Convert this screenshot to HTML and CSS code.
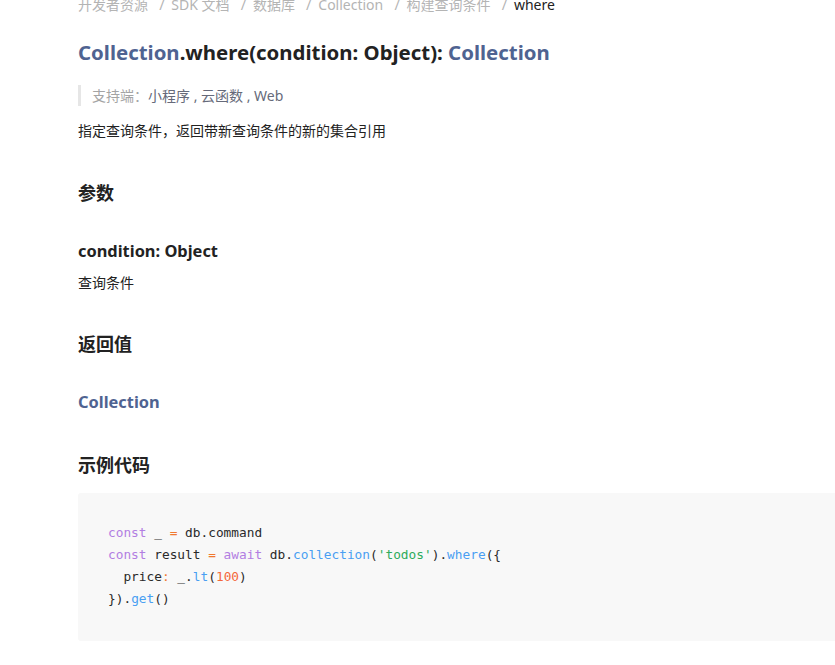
FILE: index.html
```html
<!DOCTYPE html>
<html lang="zh-CN">
<head>
<meta charset="utf-8">
<title>Collection.where</title>
<link rel="stylesheet" href="styles.css">
</head>
<body>
<div class="page">
  <nav class="crumbs">
    <span class="crumb">开发者资源</span>
    <span class="sep">/</span><span class="crumb">SDK 文档</span>
    <span class="sep">/</span><span class="crumb">数据库</span>
    <span class="sep">/</span><span class="crumb">Collection</span>
    <span class="sep">/</span><span class="crumb">构建查询条件</span>
    <span class="sep">/</span><span class="crumb current">where</span>
  </nav>
  <h1 class="title"><span class="type">Collection</span>.where(condition: Object): <span class="type">Collection</span></h1>
  <div class="support"><span class="label">支持端：</span><span class="platforms">小程序 , 云函数 , Web</span></div>
  <p class="text desc">指定查询条件，返回带新查询条件的新的集合引用</p>
  <h2 class="section">参数</h2>
  <h3 class="param">condition: Object</h3>
  <p class="text param-desc">查询条件</p>
  <h2 class="section">返回值</h2>
  <h3 class="param ret type">Collection</h3>
  <h2 class="section">示例代码</h2>
  <pre class="code"><code><span class="kw">const</span> _ <span class="op">=</span> db.command
<span class="kw">const</span> result <span class="op">=</span> <span class="kw">await</span> db.<span class="fn">collection</span>(<span class="str">'todos'</span>).<span class="fn">where</span>({
  price<span class="op">:</span> _.<span class="fn">lt</span>(<span class="num">100</span>)
}).<span class="fn">get</span>()</code></pre>
</div>
</body>
</html>
```

FILE: styles.css
```css
html, body {
  margin: 0;
  padding: 0;
  background: #ffffff;
  overflow: hidden;
}

body {
  font-family: "Noto Sans", "Noto Sans CJK SC", sans-serif;
  color: #222222;
}

.page {
  padding-left: 78px;
  width: 800px;
  margin-top: -5px;
}

.crumbs {
  font-size: 14px;
  line-height: 20px;
  color: #b4b4b4;
  white-space: nowrap;
}

.sep {
  margin: 0 7px 0 7.5px;
}

.crumb.current {
  color: #222222;
}

.title {
  margin: 22px 0 0;
  font-size: 20.4px;
  line-height: 30px;
  font-weight: 700;
  color: #222222;
}

.type {
  color: #4f6391;
}

.support {
  margin-top: 18px;
  border-left: 3px solid #e6e6e6;
  padding-left: 11px;
  font-size: 14px;
  line-height: 21px;
}

.support .label {
  color: #a4a4a4;
}

.support .platforms {
  color: #666a7a;
}

.text {
  margin: 0;
  font-size: 14px;
  line-height: 22px;
  color: #222222;
}

.desc {
  margin-top: 14px;
}

.section {
  margin: 38px 0 0;
  font-size: 18px;
  line-height: 26px;
  font-weight: 700;
  color: #222222;
}

.param {
  margin: 33px 0 0;
  font-size: 16.4px;
  line-height: 24px;
  font-weight: 700;
  color: #222222;
}

.param.ret {
  color: #4f6391;
}

.param-desc {
  margin-top: 9px;
}

.param-desc + .section {
  margin-top: 37px;
}

.code {
  margin: 15px 0 0;
  background: #f8f8f8;
  border-radius: 3px;
  padding: 29px 30px 31px;
  font-family: "DejaVu Sans Mono", "Liberation Mono", monospace;
  font-size: 12.8px;
  line-height: 22px;
  color: #2a2a2a;
}

.kw { color: #b27ee2; }
.op { color: #f0782f; }
.fn { color: #4a9ff2; }
.str { color: #2eab5c; }
.num { color: #f4673a; }
```
